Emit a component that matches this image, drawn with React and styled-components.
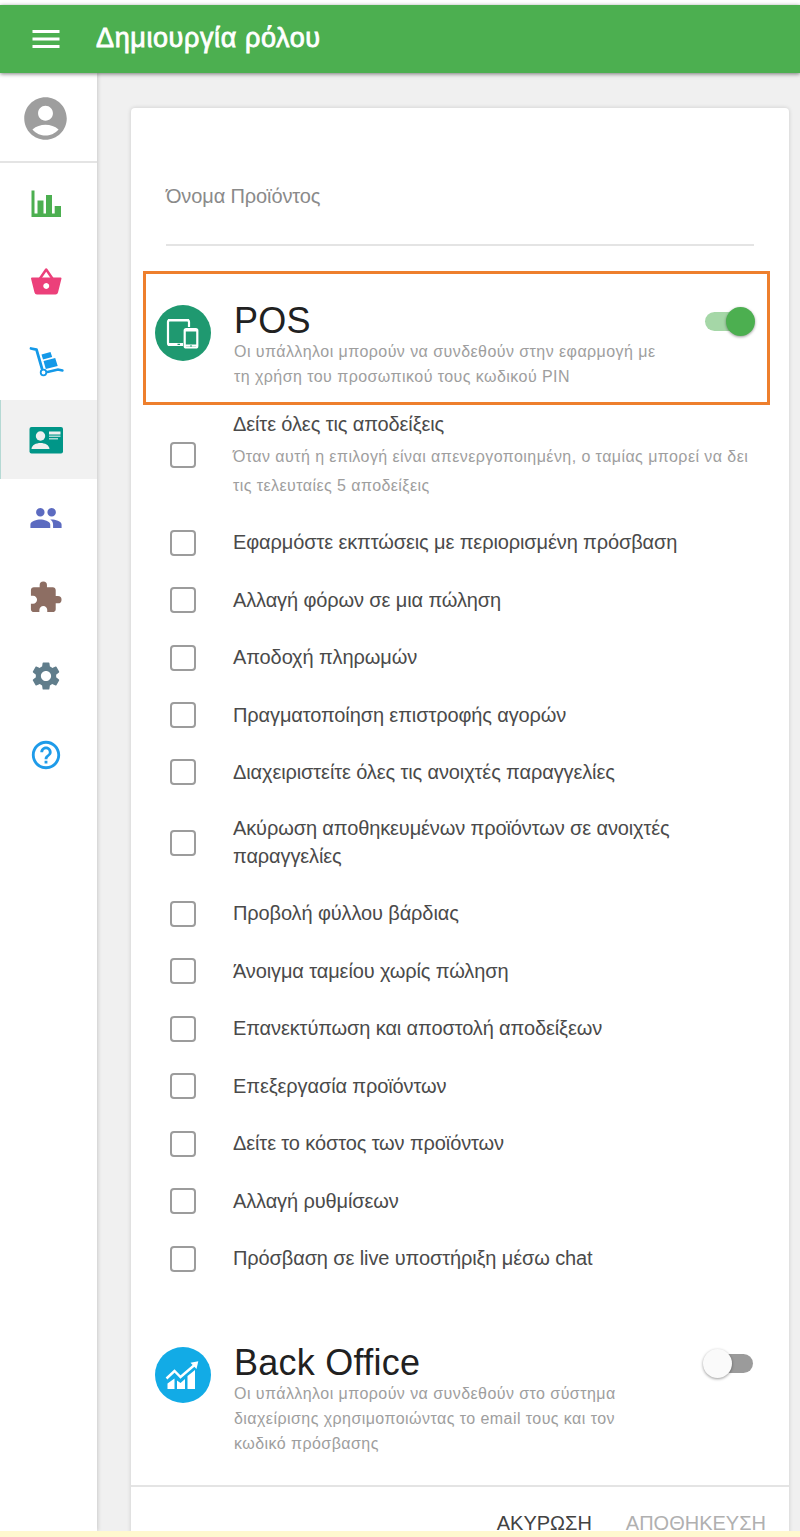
import React, { useState } from 'react'
import styled, { createGlobalStyle } from 'styled-components'
import { MdMenu, MdAccountCircle, MdExtension, MdSettings, MdHelpOutline } from 'react-icons/md'

const options = [
  { id: 'receipts', label: ['Δείτε όλες τις αποδείξεις'], hint: ['Όταν αυτή η επιλογή είναι απενεργοποιημένη, ο ταμίας μπορεί να δει', 'τις τελευταίες 5 αποδείξεις'], height: 119 },
  { id: 'discounts', label: ['Εφαρμόστε εκπτώσεις με περιορισμένη πρόσβαση'] },
  { id: 'taxes', label: ['Αλλαγή φόρων σε μια πώληση'] },
  { id: 'payments', label: ['Αποδοχή πληρωμών'] },
  { id: 'refunds', label: ['Πραγματοποίηση επιστροφής αγορών'] },
  { id: 'tickets', label: ['Διαχειριστείτε όλες τις ανοιχτές παραγγελίες'], height: 56 },
  { id: 'void', label: ['Ακύρωση αποθηκευμένων προϊόντων σε ανοιχτές', 'παραγγελίες'], height: 85 },
  { id: 'shift', label: ['Προβολή φύλλου βάρδιας'] },
  { id: 'drawer', label: ['Άνοιγμα ταμείου χωρίς πώληση'] },
  { id: 'reprint', label: ['Επανεκτύπωση και αποστολή αποδείξεων'] },
  { id: 'items', label: ['Επεξεργασία προϊόντων'] },
  { id: 'cost', label: ['Δείτε το κόστος των προϊόντων'] },
  { id: 'settings', label: ['Αλλαγή ρυθμίσεων'] },
  { id: 'chat', label: ['Πρόσβαση σε live υποστήριξη μέσω chat'] },
]

const posHint = [
  'Οι υπάλληλοι μπορούν να συνδεθούν στην εφαρμογή με',
  'τη χρήση του προσωπικού τους κωδικού PIN',
]

const backOfficeHint = [
  'Οι υπάλληλοι μπορούν να συνδεθούν στο σύστημα',
  'διαχείρισης χρησιμοποιώντας το email τους και τον',
  'κωδικό πρόσβασης',
]

const ChartIcon = () => (
  <svg width="40" height="40" viewBox="0 0 40 40" fill="currentColor">
    <path d="M5.500 7.500h3v23h26.500v3.500H5.500zM11.500 17.500h6v14h-6zM20 12h6v20h-6zM28.700 23h6.300v9h-6.300z" />
  </svg>
)

const BasketIcon = () => (
  <svg width="40" height="40" viewBox="0 0 40 40" fill="currentColor" fillRule="evenodd">
    <path d="M5 16.500q0-1 1-1h28.500q1 0 1 1l-3.500 14q-.5 2-2.500 2H11q-2 0-2.500-2zM20.200 21a3 3 0 1 0 .1 0z" />
    <path d="M14 16.500l6.200-9 6.200 9" fill="none" stroke="currentColor" strokeWidth="2.500" strokeLinejoin="round" />
  </svg>
)

const TrolleyIcon = () => (
  <svg width="40" height="40" viewBox="0 0 40 40" fill="currentColor">
    <path d="M5 7.500l5.500 1.200 5.500 19" fill="none" stroke="currentColor" strokeWidth="2.800" strokeLinecap="round" strokeLinejoin="round" />
    <path d="M21.500 31l10.500-2.500 4.500 1" fill="none" stroke="currentColor" strokeWidth="2.400" strokeLinecap="round" />
    <circle cx="17.500" cy="31.500" r="2.800" fill="none" stroke="currentColor" strokeWidth="1.800" />
    <path d="M15.500 13.500l9-2.500 1.700 5-9.200 2.500zM17.500 20l11.700-3 2.500 8-11.900 3z" />
  </svg>
)

const BadgeIcon = () => (
  <svg width="40" height="40" viewBox="0 0 40 40">
    <rect x="3.500" y="7" width="33.500" height="26.500" rx="2" fill="currentColor" />
    <circle cx="14.500" cy="16" r="4.700" fill="#f0f0f0" />
    <path d="M5.500 29c.5-8 17.500-8 18 0zM23 11.500h11.500v3H23z" fill="#f0f0f0" />
    <path d="M23 15.500h11.500v1.500H23zM23 18h9v1.500h-9z" fill="#a9d9d4" />
  </svg>
)

const PeopleIcon = () => (
  <svg width="34" height="34" viewBox="0 .7 24 24" fill="currentColor">
    <path d="M16 11c1.660 0 2.990-1.340 2.990-3S17.660 5 16 5c-1.660 0-3 1.340-3 3s1.340 3 3 3zm-8 0c1.660 0 2.990-1.340 2.990-3S9.660 5 8 5C6.340 5 5 6.340 5 8s1.340 3 3 3zm0 2c-2.330 0-7 1.170-7 3.500V19h14v-2.500c0-2.330-4.670-3.500-7-3.500zm8 0c-.29 0-.62.020-.97.050 1.160.84 1.970 1.970 1.970 3.450V19h6v-2.500c0-2.330-4.670-3.500-7-3.500z" />
  </svg>
)

const DevicesIcon = () => (
  <svg width="56" height="56" viewBox="0 0 56 56" fill="none" stroke="#fff">
    <path d="M28 40H15a2 2 0 0 1-2-2V17a2 2 0 0 1 2-2h17a2 2 0 0 1 2 2v5" strokeWidth="2.200" />
    <path d="M12.500 38h15.500v3H14q-1.500 0-1.500-1.500zM13 14h21v2.500H13z" fill="#fff" stroke="none" />
    <rect x="29.700" y="24" width="12.600" height="18.500" rx="1.500" strokeWidth="2.200" />
    <path d="M30 25.500h12M30 40.500h12" strokeWidth="1.800" />
    <path d="M22.500 39.300h2.500M35 41h2" stroke="#1f9970" strokeWidth="1.200" />
  </svg>
)

const GrowthIcon = () => (
  <svg width="56" height="56" viewBox="0 0 56 56" fill="#fff">
    <path d="M12.500 36.500l7-5V42h-7zM22 33.500l3.500 2.500 4.500-4v10h-8zM32.500 29l7.500-6v19h-7.500z" />
    <path d="M11.500 31.500l8-7.500 6 6 14-12" fill="none" stroke="#fff" strokeWidth="2.400" />
    <path d="M35.500 15.700l7.800-1.400-1.800 7.700z" />
  </svg>
)

const nav = [
  { id: 'reports', color: '#4caf50', icon: <ChartIcon /> },
  { id: 'goods', color: '#ec407a', icon: <BasketIcon /> },
  { id: 'inventory', color: '#1499e8', icon: <TrolleyIcon /> },
  { id: 'employees', color: '#009688', icon: <BadgeIcon />, active: true },
  { id: 'customers', color: '#5c6bc0', icon: <PeopleIcon /> },
  { id: 'integrations', color: '#8d6e63', icon: <MdExtension size={35} /> },
  { id: 'config', color: '#607d8b', icon: <MdSettings size={34} /> },
  { id: 'help', color: '#1e9be9', icon: <MdHelpOutline size={34} /> },
]

function Lines({ items }) {
  return items.map((text) => <Line key={text}>{text}</Line>)
}

function App() {
  const [checked, setChecked] = useState({})
  const [pos, setPos] = useState(true)
  const [backOffice, setBackOffice] = useState(false)

  const toggle = (id) => setChecked({ ...checked, [id]: !checked[id] })

  return (
    <Page>
      <GlobalStyle />
      <Header>
        <MdMenu size={36} />
        <Title>Δημιουργία ρόλου</Title>
      </Header>
      <Body>
        <Sidebar>
          <Profile>
            <MdAccountCircle size={51} />
          </Profile>
          {nav.map((item) => (
            <NavItem key={item.id} $color={item.color} $active={item.active}>
              {item.icon}
            </NavItem>
          ))}
        </Sidebar>
        <Main>
          <Card>
            <Field>Όνομα Προϊόντος</Field>
            <Section $height={124}>
              <Highlight />
              <Round $color="#1f9970"><DevicesIcon /></Round>
              <SectionText>
                <SectionTitle>POS</SectionTitle>
                <SectionHint><Lines items={posHint} /></SectionHint>
              </SectionText>
              <Switch $on={pos} onClick={() => setPos(!pos)}><Knob $on={pos} /></Switch>
            </Section>
            <div>
              {options.map((o) => (
                <Option key={o.id} $height={o.height} onClick={() => toggle(o.id)}>
                  <Box $on={checked[o.id]} />
                  <OptionText $hinted={!!o.hint}>
                    <Label><Lines items={o.label} /></Label>
                    {o.hint && <OptionHint><Lines items={o.hint} /></OptionHint>}
                  </OptionText>
                </Option>
              ))}
            </div>
            <Section $height={172}>
              <Round $color="#12abe6"><GrowthIcon /></Round>
              <SectionText>
                <SectionTitle>Back Office</SectionTitle>
                <SectionHint><Lines items={backOfficeHint} /></SectionHint>
              </SectionText>
              <Switch $on={backOffice} onClick={() => setBackOffice(!backOffice)}><Knob $on={backOffice} /></Switch>
            </Section>
            <Actions>
              <Button>ΑΚΥΡΩΣΗ</Button>
              <Button $muted>ΑΠΟΘΗΚΕΥΣΗ</Button>
            </Actions>
          </Card>
        </Main>
      </Body>
      <BottomStrip />
    </Page>
  )
}

const GlobalStyle = createGlobalStyle`
  * {
    box-sizing: border-box;
  }
  body {
    margin: 0;
    font-family: 'Liberation Sans', Arial, sans-serif;
  }
`
const Page = styled.div`
  display: flex;
  flex-direction: column;
  width: 800px;
  height: 1537px;
  overflow: hidden;
  background: #fff;
`
const Header = styled.header`
  display: flex;
  align-items: center;
  flex: none;
  height: 68px;
  margin-top: 5px;
  padding-left: 28px;
  gap: 32px;
  color: #fff;
  background: #4caf50;
  box-shadow: 0 1px 4px rgba(0, 0, 0, 0.5);
  z-index: 2;
`
const Title = styled.h1`
  margin: 0;
  padding-bottom: 1px;
  font-size: 27px;
  font-weight: 400;
  letter-spacing: 0.6px;
  -webkit-text-stroke: 0.8px #fff;
`
const Body = styled.div`
  display: flex;
  flex: 1;
  min-height: 0;
`
const Sidebar = styled.nav`
  width: 97px;
  background: #fff;
  box-shadow: 1px 0 4px rgba(0, 0, 0, 0.16);
  z-index: 1;
`
const Profile = styled.div`
  display: flex;
  align-items: center;
  justify-content: center;
  height: 90px;
  padding: 2px 6px 0 0;
  color: #9e9e9e;
  border-bottom: 2px solid #e4e4e4;
`
const NavItem = styled.div`
  display: flex;
  align-items: center;
  justify-content: center;
  height: 78.900px;
  padding: 1px 6px 0 0;
  color: ${(p) => p.$color};
  background: ${(p) => (p.$active ? '#f1f1f1' : 'none')};
  box-shadow: ${(p) => (p.$active ? 'inset 1px 0 #b5d9d4' : 'none')};
`
const Main = styled.main`
  flex: 1;
  padding: 35px 11px 0 34px;
  background: #f0f0f0;
`
const Card = styled.section`
  display: flex;
  flex-direction: column;
  width: 658px;
  height: 1440px;
  background: #fff;
  border-radius: 4px;
  box-shadow: 0 0 4px rgba(0, 0, 0, 0.16);
`
const Field = styled.div`
  flex: none;
  height: 138px;
  margin: 0 35px;
  padding-top: 76px;
  font-size: 20px;
  line-height: 24px;
  letter-spacing: -0.12px;
  color: #8a8a8a;
  border-bottom: 2px solid #e4e4e4;
`
const Section = styled.div`
  position: relative;
  display: flex;
  flex: none;
  height: ${(p) => p.$height}px;
  margin-top: 25px;
  padding: 27px 36px 0 24px;
`
/* orange frame drawn over the section */
const Highlight = styled.div`
  position: absolute;
  left: 12px;
  top: 0;
  width: 627px;
  height: 134px;
  border: 3px solid #ee7f2d;
  pointer-events: none;
`
const Round = styled.div`
  width: 56px;
  height: 56px;
  margin-top: 7px;
  flex: none;
  border-radius: 50%;
  background: ${(p) => p.$color};
`
const SectionText = styled.div`
  flex: 1;
  margin-left: 23px;
`
const SectionTitle = styled.h2`
  margin: 0;
  font-size: 36px;
  font-weight: 400;
  line-height: 46px;
  letter-spacing: 0.25px;
  color: #212121;
`
const SectionHint = styled.div`
  margin-top: -5px;
  font-size: 16px;
  line-height: 25px;
  letter-spacing: 0.44px;
  color: #9e9e9e;
`
const Line = styled.div`
  white-space: nowrap;
`
const Switch = styled.div`
  display: flex;
  align-items: center;
  justify-content: ${(p) => (p.$on ? 'flex-end' : 'flex-start')};
  width: 48px;
  height: 19px;
  margin-top: 14px;
  flex: none;
  border-radius: 10px;
  background: ${(p) => (p.$on ? '#a5d7a7' : '#9b9b9b')};
`
const Knob = styled.div`
  width: 29px;
  height: 29px;
  flex: none;
  margin: 0 -2px;
  border-radius: 50%;
  background: ${(p) => (p.$on ? '#4caf50' : '#fafafa')};
  box-shadow: 0 1px 3px rgba(0, 0, 0, 0.4);
`
const Option = styled.div`
  display: flex;
  align-items: center;
  height: ${(p) => p.$height || 57.520}px;
  padding-left: 39px;
  gap: 37px;
`
const Box = styled.div`
  width: 26px;
  height: 26px;
  flex: none;
  border: 2px solid #9c9c9c;
  border-radius: 4px;
  background: ${(p) => (p.$on ? '#4caf50' : '#fff')};
`
const OptionText = styled.div`
  padding-top: ${(p) => (p.$hinted ? 2 : 0.5)}px;
`
const Label = styled.div`
  font-size: 20px;
  line-height: 27.500px;
  letter-spacing: -0.12px;
  color: #4a4a4a;
`
const OptionHint = styled.div`
  padding-top: 5px;
  font-size: 16px;
  line-height: 28.500px;
  letter-spacing: 0.43px;
  color: #9e9e9e;
`
const Actions = styled.div`
  display: flex;
  justify-content: flex-end;
  gap: 34px;
  padding: 24px 23px 0 0;
  border-top: 2px solid #e4e4e4;
`
const Button = styled.button`
  padding: 0;
  border: 0;
  background: none;
  font-family: inherit;
  font-size: 20px;
  line-height: 24px;
  color: ${(p) => (p.$muted ? '#b0b0b0' : '#424242')};
`
const BottomStrip = styled.div`
  height: 6px;
  flex: none;
  background: #fff8cf;
  z-index: 3;
`

export default App
